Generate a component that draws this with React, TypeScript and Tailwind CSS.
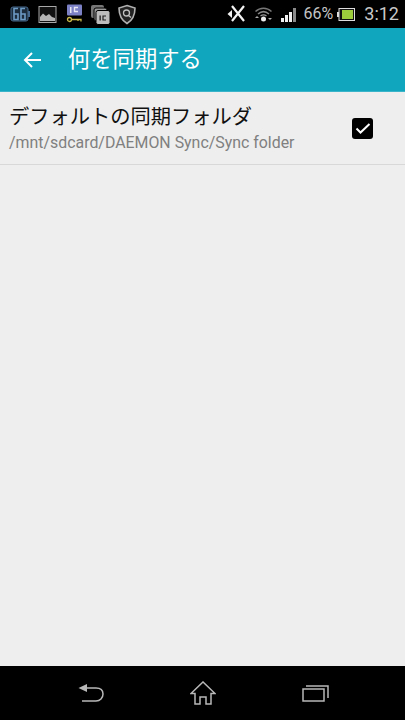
import { ReactElement } from "react";

const cjk = "font-['Roboto','Noto_Sans_CJK_JP',sans-serif]";

function StatusLeft(): ReactElement {
	return (
		<div className="flex items-center pl-[10px]">
			{/* battery 66 */}
			<svg width="20" height="18" viewBox="0 0 20 18">
				<rect x="1" y="2" width="17" height="14" rx="2" fill="#1c2c3c" stroke="#45688c" strokeWidth="1" />
				<rect x="18" y="6" width="2" height="6" fill="#45688c" />
				<path d="M8 3.500H4v11h4v-5.500H4M15 3.500h-4v11h4v-5.500h-4" fill="none" stroke="#6d9ac4" strokeWidth="1.600" />
			</svg>
			{/* picture */}
			<svg width="19" height="19" viewBox="0 0 19 19" className="ml-[8px]">
				<rect x="1" y="1.500" width="17" height="16" fill="#111" stroke="#a8a8a8" strokeWidth="1" />
				<path d="M2 16v-4l3-3.500 3 2.500 3-2 3 3 3 1v3z" fill="#b4b4b4" />
			</svg>
			{/* key */}
			<svg width="17" height="20" viewBox="0 0 17 20" className="ml-[9px]">
				<rect x="1" y="0.500" width="15" height="11" rx="1" fill="#7c80c4" />
				<rect x="4" y="3" width="1.500" height="6" fill="#e6e6f4" />
				<path d="M12 3.500H8.500v4H12" fill="none" stroke="#e6e6f4" strokeWidth="1.400" />
				<circle cx="3.500" cy="15.500" r="2" fill="none" stroke="#c8b84a" strokeWidth="1.300" />
				<path d="M5.500 15.500H15v2M12 15.500v1.500" fill="none" stroke="#c8b84a" strokeWidth="1.300" />
			</svg>
			{/* stacked copies */}
			<svg width="20" height="21" viewBox="0 0 20 20" className="ml-[7px]">
				<rect x="1" y="0.500" width="13" height="13" rx="2" fill="#777" />
				<rect x="4" y="3.500" width="13" height="13" rx="2" fill="#999" stroke="#000" strokeWidth="1" />
				<rect x="6" y="6" width="14" height="14" rx="2" fill="#bdbdbd" stroke="#000" strokeWidth="1" />
				<rect x="9.500" y="11" width="1.300" height="5" fill="#222" />
				<path d="M16 11.500h-3v4h3" fill="none" stroke="#222" strokeWidth="1.200" />
			</svg>
			{/* shield */}
			<svg width="20" height="21" viewBox="0 0 20 20" className="ml-[7px]">
				<path d="M10 1l8 2.500c0 7-2 12-8 15.500C4 15.500 2 10.500 2 3.500z" fill="#222" stroke="#b0b0b0" strokeWidth="1.600" />
				<circle cx="9.500" cy="8.500" r="3" fill="none" stroke="#c0c0c0" strokeWidth="1.300" />
				<path d="M11.500 11l2.500 2" stroke="#c0c0c0" strokeWidth="1.400" />
			</svg>
		</div>
	);
}

function StatusRight(): ReactElement {
	return (
		<div className="flex items-center pr-[6px]">
			{/* bluetooth/nfc mark */}
			<svg width="21" height="20" viewBox="0 0 21 20">
				<path d="M5 2l12 15M17 2L5 17" stroke="#f2f2f2" strokeWidth="2.200" />
				<path d="M0.500 10L5 6v8z" fill="#f2f2f2" />
			</svg>
			{/* wifi */}
			<svg width="19" height="18" viewBox="0 0 19 18" className="ml-[6px]">
				<path d="M1.500 6.500C6 2 13 2 17.500 6.500" fill="none" stroke="#777" strokeWidth="1.500" />
				<path d="M4 9c3.500-3 7.500-3 11 0" fill="none" stroke="#888" strokeWidth="1.500" />
				<path d="M6.500 11c2-1.500 4-1.500 6 0" fill="none" stroke="#999" strokeWidth="1.300" />
				<circle cx="9.500" cy="14" r="2.500" fill="#eee" />
				<path d="M1 13l2-2 2 2zM14 13l2 2 2-2z" fill="#aaa" />
			</svg>
			{/* signal */}
			<svg width="18" height="17" viewBox="0 0 18 17" className="ml-[8px]">
				<rect x="0" y="12" width="3" height="4" fill="#f2f2f2" />
				<rect x="4" y="9" width="3" height="7" fill="#f2f2f2" />
				<rect x="8" y="6" width="3" height="10" fill="#f2f2f2" />
				<rect x="12" y="2" width="3" height="14" fill="#8a8a8a" />
			</svg>
			<span className="ml-[5px] font-['Roboto',sans-serif] text-[16px] leading-none text-[#c4c4c4]">66%</span>
			<svg width="18" height="13" viewBox="0 0 18 13" className="ml-[4px]">
				<rect x="0" y="4" width="2" height="5" fill="#ddd" />
				<rect x="2" y="0.500" width="15.500" height="12" fill="#111" stroke="#ddd" strokeWidth="1" />
				<rect x="5" y="2" width="11" height="9" fill="#9ccc3c" />
			</svg>
			<span className="ml-[9px] font-['Roboto',sans-serif] text-[18px] leading-none text-[#c8c8c8]">3:12</span>
		</div>
	);
}

export default function App(): ReactElement {
	return (
		<div className={`flex h-[720px] w-[405px] flex-col overflow-hidden bg-[#eeeeee] ${cjk}`}>
			<div className="flex h-[28px] shrink-0 items-center justify-between bg-black">
				<StatusLeft />
				<StatusRight />
			</div>
			<header className="flex h-[64px] shrink-0 items-center border-b border-[#3ab4c8] bg-[#10a6bd]">
				<svg width="20" height="18" viewBox="0 0 20 18" className="ml-[22px]">
					<path d="M19 9H3M10 2L3 9l7 7" fill="none" stroke="#ffffff" strokeWidth="2" />
				</svg>
				<h1 className="ml-[26px] text-[22.3px] leading-none text-white">何を同期する</h1>
			</header>
			<div className="flex h-[73px] shrink-0 items-center justify-between border-b border-[#d8d8d8] pl-[9px] pr-[32px]">
				<div className="flex flex-col pt-[3px]">
					<span className="text-[20.25px] leading-[26px] text-[#111111]">デフォルトの同期フォルダ</span>
					<span className="text-[15.9px] leading-[26px] text-[#808080]">/mnt/sdcard/DAEMON Sync/Sync folder</span>
				</div>
				<div className="flex h-[21px] w-[21px] items-center justify-center rounded-[3px] bg-black">
					<svg width="16" height="13" viewBox="0 0 16 13">
						<path d="M1.500 6.500l4 4L14.500 2" fill="none" stroke="#ffffff" strokeWidth="2" />
					</svg>
				</div>
			</div>
			<div className="flex-1" />
			<nav className="flex h-[54px] shrink-0 items-center justify-between bg-black pl-[78px] pr-[76px]">
				<svg width="26" height="20" viewBox="0 0 26 20">
					<path d="M0.500 5L9 1v8z" fill="#b8b8b8" />
					<path d="M8 5h10c4 0 7 2 7 6s-3 7-7 7H4" fill="none" stroke="#b8b8b8" strokeWidth="1.500" />
				</svg>
				<svg width="26" height="24" viewBox="0 0 26 24">
					<path d="M1 12.500L13 1l12 11.500h-4V23h-5v-7h-6v7H5V12.500z" fill="none" stroke="#b8b8b8" strokeWidth="1.500" />
				</svg>
				<svg width="27" height="18" viewBox="0 0 27 18">
					<rect x="1" y="5" width="21" height="12" fill="none" stroke="#b8b8b8" strokeWidth="1.500" />
					<path d="M4 2h22v12" fill="none" stroke="#b8b8b8" strokeWidth="1.500" />
				</svg>
			</nav>
		</div>
	);
}
